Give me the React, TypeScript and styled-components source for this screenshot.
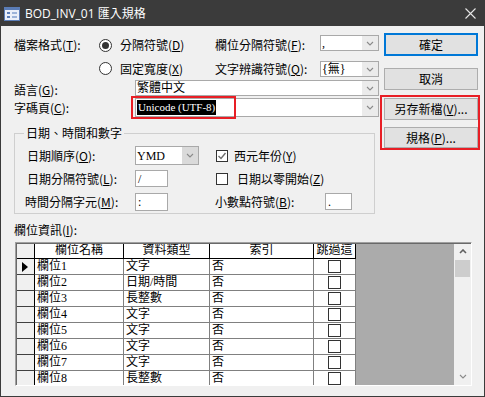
import React from 'react';
import styled, { createGlobalStyle } from 'styled-components';

const GlobalStyle = createGlobalStyle`
  html, body { margin: 0; padding: 0; background: #fff; }
  body {
    font-family: "Noto Sans CJK TC", "Noto Sans", sans-serif;
    font-size: 12px;
    line-height: 16px;
    color: #000;
  }
  * { box-sizing: border-box; }
  u { text-decoration-thickness: 1px; text-underline-offset: 1px; }
`;

const SERIF = `"Liberation Serif", "Noto Sans CJK TC", serif`;

const Window = styled.div`
  width: 485px;
  height: 397px;
  border: 1px solid #3b3b3b;
  background: #f0f0f0;
  display: flex;
  flex-direction: column;
  overflow: hidden;
`;

const TitleBar = styled.div`
  height: 25px;
  flex-shrink: 0;
  display: flex;
  align-items: center;
  gap: 5px;
  padding-left: 3px;
  background: #3b3b3b;
  color: #fff;
  font-family: "Open Sans", "Noto Sans CJK TC", sans-serif;
  font-size: 12px;
`;

const CloseBox = styled.div`
  margin-left: auto;
  width: 28px;
  height: 25px;
  display: flex;
  align-items: center;
  justify-content: center;
`;

const Body = styled.div`
  flex: 1;
  display: flex;
  flex-direction: column;
  padding: 7px 6px 10px 13px;
`;

const UpperArea = styled.div`
  display: flex;
  align-items: flex-start;
`;

const LeftColumn = styled.div`
  width: 370px;
  display: flex;
  flex-direction: column;
`;

const RightColumn = styled.div`
  width: 94px;
  display: flex;
  flex-direction: column;
`;

const FormatGrid = styled.div`
  display: grid;
  grid-template-columns: 86px 35px 80px 105px 59px;
  grid-template-rows: 24px 23px 18px 20px;
  grid-template-areas:
    "fmt r1 r1 sepL sep"
    ".   r2 r2 qL   q"
    "lang . langC langC langC"
    "cp   . cpC cpC cpC";
`;

const Label = styled.div<{ $area?: string; $align?: string }>`
  grid-area: ${p => p.$area || 'auto'};
  align-self: ${p => p.$align || 'center'};
  white-space: nowrap;
`;

const Slot = styled.div<{ $area: string; $top: number }>`
  grid-area: ${p => p.$area};
  align-self: start;
  margin-top: ${p => p.$top}px;
`;

const RadioOption = styled.label<{ $area: string }>`
  grid-area: ${p => p.$area};
  align-self: center;
  display: flex;
  align-items: center;
  gap: 8px;
  margin-left: -1px;
  white-space: nowrap;
`;

const RadioCircle = styled.span<{ $on?: boolean }>`
  width: 13px;
  height: 13px;
  border-radius: 50%;
  border: 1px solid #333;
  background: #fff;
  display: flex;
  align-items: center;
  justify-content: center;
  &::after {
    content: '';
    width: 7px;
    height: 7px;
    border-radius: 50%;
    background: ${p => (p.$on ? '#333' : 'transparent')};
  }
`;

const ComboBox = styled.div<{ $h: number; $w?: number }>`
  position: relative;
  display: flex;
  height: ${p => p.$h}px;
  width: ${p => (p.$w ? `${p.$w}px` : 'auto')};
  background: #fff;
  border: 1px solid #a9a9a9;
`;

const ComboValue = styled.div`
  flex: 1;
  display: flex;
  align-items: center;
  padding-left: 1px;
  font-family: ${SERIF};
  font-size: 12px;
  white-space: nowrap;
  overflow: hidden;
`;

const ComboArrow = styled.div<{ $dark?: boolean }>`
  width: 16px;
  display: flex;
  align-items: center;
  justify-content: center;
  background: ${p => (p.$dark ? '#dadada' : '#ebebeb')};
`;

const Selected = styled.span`
  background: #000;
  color: #fff;
  font-size: 11px;
  line-height: 15px;
  padding: 0 1px;
`;

const Highlight = styled.div<{ $l: number; $t: number; $w: number; $h: number }>`
  position: absolute;
  left: ${p => p.$l}px;
  top: ${p => p.$t}px;
  width: ${p => p.$w}px;
  height: ${p => p.$h}px;
  border: 2px solid #e81e25;
  pointer-events: none;
`;

const Button = styled.div<{ $h: number; $default?: boolean; $mt?: number }>`
  width: 94px;
  height: ${p => p.$h}px;
  margin-top: ${p => p.$mt || 0}px;
  display: flex;
  align-items: center;
  justify-content: center;
  background: #e1e1e1;
  border: ${p => (p.$default ? '2px solid #0078d7' : '1px solid #adadad')};
  white-space: nowrap;
`;

const RedGroup = styled.div`
  margin: 5px -2px 0 -4px;
  border: 2px solid #e81e25;
  padding: 1px 0 0 2px;
  display: flex;
  flex-direction: column;
  gap: 7px;
`;

const GroupBox = styled.fieldset`
  margin: 7px 0 0 0;
  width: 361px;
  min-width: 0;
  border: 1px solid #cfcfcf;
  padding: 3px 0 0 12px;
  display: grid;
  grid-template-columns: 108px 80px 1fr;
  grid-template-rows: repeat(3, 23px);
`;

const Legend = styled.legend`
  padding: 0 2px;
  margin-left: -3px;
  line-height: 16px;
`;

const TextBox = styled.div<{ $w: number; $h: number }>`
  width: ${p => p.$w}px;
  height: ${p => p.$h}px;
  background: #fff;
  border: 1px solid #a9a9a9;
  padding-left: 2px;
  display: flex;
  align-items: center;
  font-family: ${SERIF};
  font-size: 12px;
`;

const FieldCell = styled.div<{ $shift?: number }>`
  display: flex;
  align-items: center;
  margin-left: ${p => p.$shift || 0}px;
  white-space: nowrap;
`;

const CheckRow = styled.label<{ $gap: number }>`
  display: flex;
  align-items: center;
  gap: ${p => p.$gap}px;
  margin-left: 1px;
  white-space: nowrap;
`;

const CheckBox = styled.span`
  width: 12px;
  height: 12px;
  border: 1px solid #333;
  background: #fff;
  display: flex;
  align-items: center;
  justify-content: center;
`;

const DecimalLabel = styled.span`
  flex: 0 0 110px;
`;

const TableLabel = styled.div`
  margin-top: 8px;
`;

const TableFrame = styled.div`
  margin: 4px 0 0 1px;
  width: 457px;
  height: 144px;
  border-style: solid;
  border-width: 1px;
  border-color: #a0a0a0 #fff #fff #a0a0a0;
  display: flex;
  overflow: hidden;
  position: relative;
  &::after {
    content: '';
    position: absolute;
    inset: 0;
    box-shadow: inset 1px 1px 0 #696969;
    pointer-events: none;
  }
`;

const DataGrid = styled.div`
  width: 340px;
  flex-shrink: 0;
  display: grid;
  grid-template-columns: 19px 89px 86px 104px 42px;
  grid-auto-rows: 16px;
  align-content: start;
  background: #fff;
`;

const Cell = styled.div<{ $head?: boolean; $selector?: boolean; $center?: boolean }>`
  border-right: 1px solid ${p => (p.$head || p.$selector ? '#000' : '#808080')};
  border-bottom: 1px solid ${p => (p.$head ? '#000' : p.$selector ? '#404040' : '#808080')};
  background: ${p => (p.$selector ? '#f0f0f0' : '#fff')};
  display: flex;
  align-items: center;
  justify-content: ${p => (p.$head || p.$center ? 'center' : 'flex-start')};
  padding-left: ${p => (p.$head || p.$center ? 0 : 2)}px;
  font-family: ${SERIF};
  font-size: 12px;
  line-height: 15px;
  white-space: nowrap;
  overflow: hidden;
`;

const GridBox = styled.span`
  width: 13px;
  height: 13px;
  border: 1px solid #333;
  background: #fff;
`;

const RowArrow = styled.span`
  width: 0;
  height: 0;
  margin-left: 4px;
  border-top: 5px solid transparent;
  border-bottom: 5px solid transparent;
  border-left: 6px solid #000;
`;

const Filler = styled.div`
  flex: 1;
  background: #ababab;
`;

const ScrollBar = styled.div`
  width: 17px;
  flex-shrink: 0;
  background: #f0f0f0;
  display: flex;
  flex-direction: column;
  align-items: center;
`;

const ScrollArrow = styled.div`
  height: 17px;
  width: 100%;
  display: flex;
  align-items: center;
  justify-content: center;
`;

const ScrollThumb = styled.div`
  width: 15px;
  height: 17px;
  background: #cdcdcd;
`;

const ScrollSpace = styled.div`
  flex: 1;
`;

const Mn = ({ k }: { k: string }) => (
  <>
    (<u>{k}</u>)
  </>
);

const Chevron = ({ up }: { up?: boolean }) => (
  <svg width="8" height="5" viewBox="0 0 8 5">
    <path
      d={up ? 'M1 4 L4 1 L7 4' : 'M1 1 L4 4 L7 1'}
      fill="none"
      stroke={up ? '#606060' : '#8a8a8a'}
      strokeWidth={up ? 1.6 : 1.1}
    />
  </svg>
);

const FormIcon = () => (
  <svg width="16" height="14" viewBox="0 0 16 14">
    <rect x="0.5" y="0.5" width="15" height="13" fill="#e9eff9" stroke="#5a7cb6" />
    <rect x="1" y="1" width="14" height="2" fill="#5a7cb6" />
    <rect x="3" y="5" width="3" height="2" fill="#5a7cb6" />
    <rect x="8" y="5" width="5" height="2" fill="#9bb3d9" />
    <rect x="3" y="9" width="3" height="2" fill="#5a7cb6" />
    <rect x="8" y="9" width="5" height="2" fill="#9bb3d9" />
  </svg>
);

const CloseIcon = () => (
  <svg width="11" height="11" viewBox="0 0 11 11">
    <path d="M0.5 0.5 L10.5 10.5 M10.5 0.5 L0.5 10.5" stroke="#e6e6e6" strokeWidth="1.1" />
  </svg>
);

const Tick = () => (
  <svg width="10" height="10" viewBox="0 0 10 10">
    <path d="M1.5 5 L4 7.5 L8.5 2" fill="none" stroke="#6d6d6d" strokeWidth="1.4" />
  </svg>
);

type FieldRow = { name: string; type: string; index: string };

const rows: FieldRow[] = [
  { name: '欄位1', type: '文字', index: '否' },
  { name: '欄位2', type: '日期/時間', index: '否' },
  { name: '欄位3', type: '長整數', index: '否' },
  { name: '欄位4', type: '文字', index: '否' },
  { name: '欄位5', type: '文字', index: '否' },
  { name: '欄位6', type: '文字', index: '否' },
  { name: '欄位7', type: '文字', index: '否' },
  { name: '欄位8', type: '長整數', index: '否' },
];

export default function App() {
  return (
    <>
      <GlobalStyle />
      <Window>
        <TitleBar>
          <FormIcon />
          <span>BOD_INV_01 匯入規格</span>
          <CloseBox>
            <CloseIcon />
          </CloseBox>
        </TitleBar>

        <Body>
          <UpperArea>
            <LeftColumn>
              <FormatGrid>
                <Label $area="fmt">
                  檔案格式<Mn k="T" />:
                </Label>
                <RadioOption $area="r1">
                  <RadioCircle $on />
                  <span>
                    分隔符號<Mn k="D" />
                  </span>
                </RadioOption>
                <RadioOption $area="r2">
                  <RadioCircle />
                  <span>
                    固定寬度<Mn k="X" />
                  </span>
                </RadioOption>

                <Label $area="sepL">
                  欄位分隔符號<Mn k="F" />:
                </Label>
                <Slot $area="sep" $top={2}>
                  <ComboBox $h={16}>
                    <ComboValue>,</ComboValue>
                    <ComboArrow>
                      <Chevron />
                    </ComboArrow>
                  </ComboBox>
                </Slot>

                <Label $area="qL">
                  文字辨識符號<Mn k="Q" />:
                </Label>
                <Slot $area="q" $top={4}>
                  <ComboBox $h={16}>
                    <ComboValue>{'{無}'}</ComboValue>
                    <ComboArrow>
                      <Chevron />
                    </ComboArrow>
                  </ComboBox>
                </Slot>

                <Label $area="lang" $align="end">
                  語言<Mn k="G" />:
                </Label>
                <Slot $area="langC" $top={0}>
                  <ComboBox $h={16}>
                    <ComboValue>繁體中文</ComboValue>
                    <ComboArrow>
                      <Chevron />
                    </ComboArrow>
                  </ComboBox>
                </Slot>

                <Label $area="cp">
                  字碼頁<Mn k="C" />:
                </Label>
                <Slot $area="cpC" $top={0}>
                  <ComboBox $h={19}>
                    <ComboValue>
                      <Selected>Unicode (UTF-8)</Selected>
                    </ComboValue>
                    <ComboArrow>
                      <Chevron />
                    </ComboArrow>
                    <Highlight $l={-5} $t={-3} $w={105} $h={23} />
                  </ComboBox>
                </Slot>
              </FormatGrid>

              <GroupBox>
                <Legend>日期、時間和數字</Legend>

                <FieldCell>
                  日期順序<Mn k="O" />:
                </FieldCell>
                <FieldCell>
                  <ComboBox $h={19} $w={64}>
                    <ComboValue>YMD</ComboValue>
                    <ComboArrow $dark>
                      <Chevron />
                    </ComboArrow>
                  </ComboBox>
                </FieldCell>
                <FieldCell>
                  <CheckRow $gap={6}>
                    <CheckBox>
                      <Tick />
                    </CheckBox>
                    <span>
                      西元年份<Mn k="Y" />
                    </span>
                  </CheckRow>
                </FieldCell>

                <FieldCell>
                  日期分隔符號<Mn k="L" />:
                </FieldCell>
                <FieldCell>
                  <TextBox $w={33} $h={17}>/</TextBox>
                </FieldCell>
                <FieldCell>
                  <CheckRow $gap={9}>
                    <CheckBox />
                    <span>
                      日期以零開始<Mn k="Z" />
                    </span>
                  </CheckRow>
                </FieldCell>

                <FieldCell $shift={-2}>
                  時間分隔字元<Mn k="M" />:
                </FieldCell>
                <FieldCell>
                  <TextBox $w={33} $h={18}>:</TextBox>
                </FieldCell>
                <FieldCell>
                  <DecimalLabel>
                    小數點符號<Mn k="B" />:
                  </DecimalLabel>
                  <TextBox $w={27} $h={17}>.</TextBox>
                </FieldCell>
              </GroupBox>
            </LeftColumn>

            <RightColumn>
              <Button $h={23} $default>
                確定
              </Button>
              <Button $h={22} $mt={12}>
                取消
              </Button>
              <RedGroup>
                <Button $h={22}>
                  另存新檔<Mn k="V" />...
                </Button>
                <Button $h={21}>
                  規格<Mn k="P" />...
                </Button>
              </RedGroup>
            </RightColumn>
          </UpperArea>

          <TableLabel>
            欄位資訊<Mn k="I" />:
          </TableLabel>
          <TableFrame>
            <DataGrid>
              <Cell $head $selector />
              <Cell $head>欄位名稱</Cell>
              <Cell $head>資料類型</Cell>
              <Cell $head>索引</Cell>
              <Cell $head>跳過這</Cell>
              {rows.map((r, i) => (
                <React.Fragment key={r.name}>
                  <Cell $selector>{i === 0 && <RowArrow />}</Cell>
                  <Cell>{r.name}</Cell>
                  <Cell>{r.type}</Cell>
                  <Cell>{r.index}</Cell>
                  <Cell $center>
                    <GridBox />
                  </Cell>
                </React.Fragment>
              ))}
            </DataGrid>
            <Filler />
            <ScrollBar>
              <ScrollArrow>
                <Chevron up />
              </ScrollArrow>
              <ScrollThumb />
              <ScrollSpace />
              <ScrollArrow>
                <Chevron />
              </ScrollArrow>
            </ScrollBar>
          </TableFrame>
        </Body>
      </Window>
    </>
  );
}
